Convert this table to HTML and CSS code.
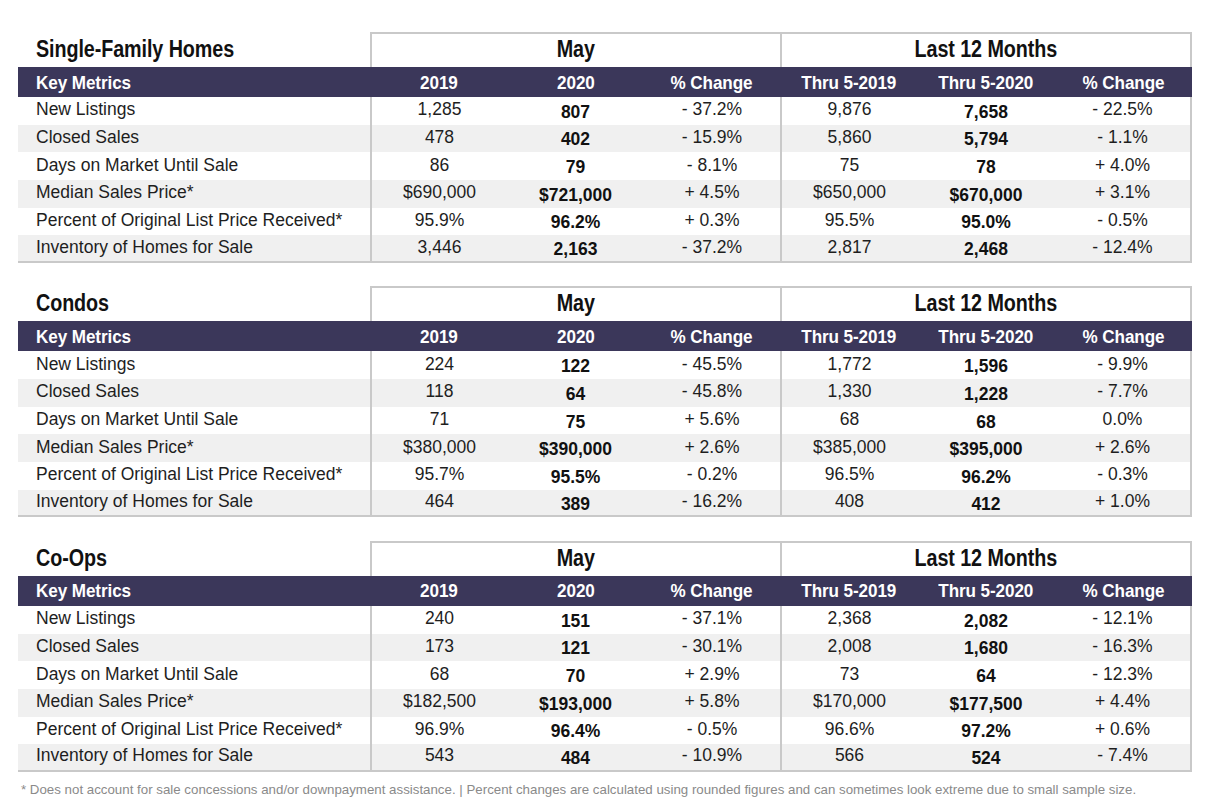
FILE: index.html
```html
<!DOCTYPE html>
<html lang="en">
<head>
<meta charset="utf-8">
<title>Market Metrics</title>
<link rel="stylesheet" href="styles.css">
</head>
<body>
<main class="page">

<section class="block">
  <div class="grid title-row">
    <div class="c title"><span class="tt">Single-Family Homes</span></div>
    <div class="c group g1"><span class="tt">May</span></div>
    <div class="c group g2"><span class="tt">Last 12 Months</span></div>
  </div>
  <div class="grid head-row">
    <div class="c label"><span class="ht">Key Metrics</span></div>
    <div class="c"><span class="ht">2019</span></div><div class="c"><span class="ht">2020</span></div><div class="c"><span class="ht">% Change</span></div>
    <div class="c"><span class="ht">Thru 5-2019</span></div><div class="c"><span class="ht">Thru 5-2020</span></div><div class="c"><span class="ht">% Change</span></div>
  </div>
  <div class="grid row"><div class="c label">New Listings</div><div class="c s">1,285</div><div class="c b">807</div><div class="c">- 37.2%</div><div class="c s">9,876</div><div class="c b">7,658</div><div class="c e">- 22.5%</div></div>
  <div class="grid row alt"><div class="c label">Closed Sales</div><div class="c s">478</div><div class="c b">402</div><div class="c">- 15.9%</div><div class="c s">5,860</div><div class="c b">5,794</div><div class="c e">- 1.1%</div></div>
  <div class="grid row"><div class="c label">Days on Market Until Sale</div><div class="c s">86</div><div class="c b">79</div><div class="c">- 8.1%</div><div class="c s">75</div><div class="c b">78</div><div class="c e">+ 4.0%</div></div>
  <div class="grid row alt"><div class="c label">Median Sales Price*</div><div class="c s">$690,000</div><div class="c b">$721,000</div><div class="c">+ 4.5%</div><div class="c s">$650,000</div><div class="c b">$670,000</div><div class="c e">+ 3.1%</div></div>
  <div class="grid row"><div class="c label">Percent of Original List Price Received*</div><div class="c s">95.9%</div><div class="c b">96.2%</div><div class="c">+ 0.3%</div><div class="c s">95.5%</div><div class="c b">95.0%</div><div class="c e">- 0.5%</div></div>
  <div class="grid row alt last"><div class="c label">Inventory of Homes for Sale</div><div class="c s">3,446</div><div class="c b">2,163</div><div class="c">- 37.2%</div><div class="c s">2,817</div><div class="c b">2,468</div><div class="c e">- 12.4%</div></div>
</section>

<section class="block">
  <div class="grid title-row">
    <div class="c title"><span class="tt">Condos</span></div>
    <div class="c group g1"><span class="tt">May</span></div>
    <div class="c group g2"><span class="tt">Last 12 Months</span></div>
  </div>
  <div class="grid head-row">
    <div class="c label"><span class="ht">Key Metrics</span></div>
    <div class="c"><span class="ht">2019</span></div><div class="c"><span class="ht">2020</span></div><div class="c"><span class="ht">% Change</span></div>
    <div class="c"><span class="ht">Thru 5-2019</span></div><div class="c"><span class="ht">Thru 5-2020</span></div><div class="c"><span class="ht">% Change</span></div>
  </div>
  <div class="grid row"><div class="c label">New Listings</div><div class="c s">224</div><div class="c b">122</div><div class="c">- 45.5%</div><div class="c s">1,772</div><div class="c b">1,596</div><div class="c e">- 9.9%</div></div>
  <div class="grid row alt"><div class="c label">Closed Sales</div><div class="c s">118</div><div class="c b">64</div><div class="c">- 45.8%</div><div class="c s">1,330</div><div class="c b">1,228</div><div class="c e">- 7.7%</div></div>
  <div class="grid row"><div class="c label">Days on Market Until Sale</div><div class="c s">71</div><div class="c b">75</div><div class="c">+ 5.6%</div><div class="c s">68</div><div class="c b">68</div><div class="c e">0.0%</div></div>
  <div class="grid row alt"><div class="c label">Median Sales Price*</div><div class="c s">$380,000</div><div class="c b">$390,000</div><div class="c">+ 2.6%</div><div class="c s">$385,000</div><div class="c b">$395,000</div><div class="c e">+ 2.6%</div></div>
  <div class="grid row"><div class="c label">Percent of Original List Price Received*</div><div class="c s">95.7%</div><div class="c b">95.5%</div><div class="c">- 0.2%</div><div class="c s">96.5%</div><div class="c b">96.2%</div><div class="c e">- 0.3%</div></div>
  <div class="grid row alt last"><div class="c label">Inventory of Homes for Sale</div><div class="c s">464</div><div class="c b">389</div><div class="c">- 16.2%</div><div class="c s">408</div><div class="c b">412</div><div class="c e">+ 1.0%</div></div>
</section>

<section class="block">
  <div class="grid title-row">
    <div class="c title"><span class="tt">Co-Ops</span></div>
    <div class="c group g1"><span class="tt">May</span></div>
    <div class="c group g2"><span class="tt">Last 12 Months</span></div>
  </div>
  <div class="grid head-row">
    <div class="c label"><span class="ht">Key Metrics</span></div>
    <div class="c"><span class="ht">2019</span></div><div class="c"><span class="ht">2020</span></div><div class="c"><span class="ht">% Change</span></div>
    <div class="c"><span class="ht">Thru 5-2019</span></div><div class="c"><span class="ht">Thru 5-2020</span></div><div class="c"><span class="ht">% Change</span></div>
  </div>
  <div class="grid row"><div class="c label">New Listings</div><div class="c s">240</div><div class="c b">151</div><div class="c">- 37.1%</div><div class="c s">2,368</div><div class="c b">2,082</div><div class="c e">- 12.1%</div></div>
  <div class="grid row alt"><div class="c label">Closed Sales</div><div class="c s">173</div><div class="c b">121</div><div class="c">- 30.1%</div><div class="c s">2,008</div><div class="c b">1,680</div><div class="c e">- 16.3%</div></div>
  <div class="grid row"><div class="c label">Days on Market Until Sale</div><div class="c s">68</div><div class="c b">70</div><div class="c">+ 2.9%</div><div class="c s">73</div><div class="c b">64</div><div class="c e">- 12.3%</div></div>
  <div class="grid row alt"><div class="c label">Median Sales Price*</div><div class="c s">$182,500</div><div class="c b">$193,000</div><div class="c">+ 5.8%</div><div class="c s">$170,000</div><div class="c b">$177,500</div><div class="c e">+ 4.4%</div></div>
  <div class="grid row"><div class="c label">Percent of Original List Price Received*</div><div class="c s">96.9%</div><div class="c b">96.4%</div><div class="c">- 0.5%</div><div class="c s">96.6%</div><div class="c b">97.2%</div><div class="c e">+ 0.6%</div></div>
  <div class="grid row alt last"><div class="c label">Inventory of Homes for Sale</div><div class="c s">543</div><div class="c b">484</div><div class="c">- 10.9%</div><div class="c s">566</div><div class="c b">524</div><div class="c e">- 7.4%</div></div>
</section>

<p class="note">* Does not account for sale concessions and/or downpayment assistance. | Percent changes are calculated using rounded figures and can sometimes look extreme due to small sample size.</p>

</main>
</body>
</html>
```

FILE: styles.css
```css
* { box-sizing: border-box; }

html, body {
  margin: 0;
  padding: 0;
  background: #ffffff;
}

body {
  font-family: "Liberation Sans", Arial, sans-serif;
  color: #1e1e1e;
}

.page {
  padding: 32px 0 0 18px;
  width: 1216px;
}

.block {
  margin-bottom: 23.5px;
}

.grid {
  display: grid;
  grid-template-columns: 352px 137px 137px 136px 137px 138px 137px;
  width: 1174px;
}

.c {
  display: flex;
  align-items: center;
  justify-content: center;
  white-space: nowrap;
}

/* condensed heading text */
.tt, .ht {
  display: inline-block;
  font-weight: bold;
  letter-spacing: -0.1px;
}

.tt {
  transform: scaleX(0.84);
  transform-origin: center;
}

.ht {
  transform: scaleX(0.9);
  transform-origin: center;
}

.label .ht,
.title .tt {
  transform-origin: left center;
}

/* title row */
.title-row {
  height: 35px;
  grid-template-columns: 352px 410px 412px;
}

.title-row .c {
  align-items: flex-end;
  padding-bottom: 4px;
  font-size: 23.5px;
  line-height: 27px;
  color: #111111;
}

.title-row .title {
  justify-content: flex-start;
  padding-left: 18px;
}

.group {
  border-top: 2px solid #c9c9c9;
  border-left: 2px solid #c9c9c9;
}

.group.g2 {
  border-right: 2px solid #c9c9c9;
}

/* header bar */
.head-row {
  height: 30px;
  background: #3b375a;
  color: #ffffff;
  font-size: 19px;
}

.head-row .c {
  padding-top: 1px;
}

.label {
  justify-content: flex-start !important;
  padding-left: 18px;
}

/* data rows */
.row {
  height: 27.67px;
  font-size: 17.5px;
  color: #1e1e1e;
}

.row.alt {
  background: #f0f0f0;
}

.row .c {
  padding-bottom: 2px;
}

.row .s {
  border-left: 2px solid #c9c9c9;
}

.row .e {
  border-right: 2px solid #c9c9c9;
}

.row .b {
  font-weight: bold;
  color: #111111;
  padding-bottom: 0;
  padding-top: 3px;
}

.row.last {
  border-bottom: 2px solid #c9c9c9;
}

.note {
  margin: -13px 0 0 3px;
  font-size: 13.3px;
  color: #8a8a8a;
  white-space: nowrap;
}
```
